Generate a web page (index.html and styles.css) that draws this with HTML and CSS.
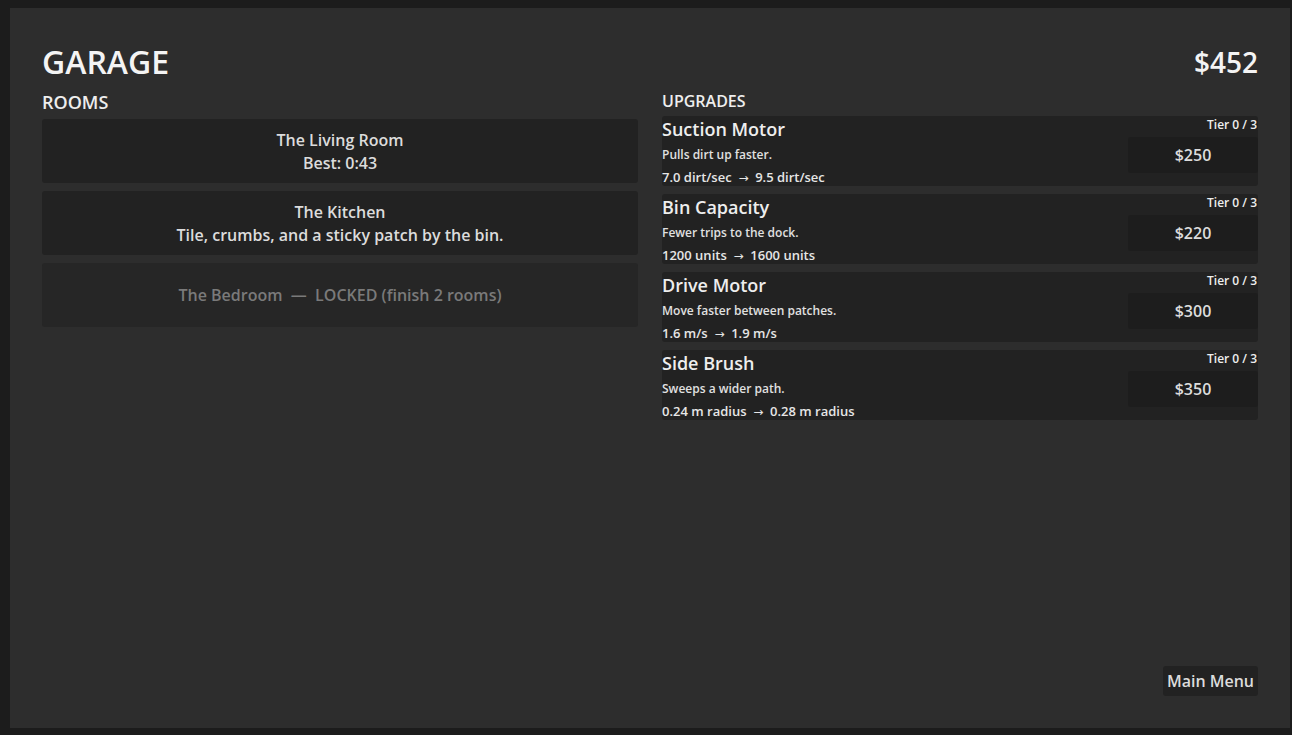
FILE: index.html
```html
<!DOCTYPE html>
<html lang="en">
<head>
    <meta charset="UTF-8">
    <meta name="viewport" content="width=device-width, initial-scale=1.0">
    <title>Garage</title>
    <link rel="stylesheet" href="styles.css">
</head>
<body>
    <div class="screen">
        <div class="header">
            <h1 class="title">GARAGE</h1>
            <div class="money">$452</div>
        </div>

        <div class="columns">
            <div class="col">
                <div class="label rooms-label">ROOMS</div>
                <button class="room">
                    <span>The Living Room</span>
                    <span>Best: 0:43</span>
                </button>
                <button class="room">
                    <span>The Kitchen</span>
                    <span>Tile, crumbs, and a sticky patch by the bin.</span>
                </button>
                <button class="room locked" disabled>
                    <span>The Bedroom &nbsp;—&nbsp; LOCKED (finish 2 rooms)</span>
                </button>
            </div>

            <div class="col">
                <div class="label upgrades-label">UPGRADES</div>

                <div class="upgrade">
                    <div class="info">
                        <div class="name">Suction Motor</div>
                        <div class="desc">Pulls dirt up faster.</div>
                        <div class="stats">7.0 dirt/sec &nbsp;<span class="arrow">→</span>&nbsp; 9.5 dirt/sec</div>
                    </div>
                    <div class="buy">
                        <div class="tier">Tier 0 / 3</div>
                        <button class="price">$250</button>
                    </div>
                </div>

                <div class="upgrade">
                    <div class="info">
                        <div class="name">Bin Capacity</div>
                        <div class="desc">Fewer trips to the dock.</div>
                        <div class="stats">1200 units &nbsp;<span class="arrow">→</span>&nbsp; 1600 units</div>
                    </div>
                    <div class="buy">
                        <div class="tier">Tier 0 / 3</div>
                        <button class="price">$220</button>
                    </div>
                </div>

                <div class="upgrade">
                    <div class="info">
                        <div class="name">Drive Motor</div>
                        <div class="desc">Move faster between patches.</div>
                        <div class="stats">1.6 m/s &nbsp;<span class="arrow">→</span>&nbsp; 1.9 m/s</div>
                    </div>
                    <div class="buy">
                        <div class="tier">Tier 0 / 3</div>
                        <button class="price">$300</button>
                    </div>
                </div>

                <div class="upgrade">
                    <div class="info">
                        <div class="name">Side Brush</div>
                        <div class="desc">Sweeps a wider path.</div>
                        <div class="stats">0.24 m radius &nbsp;<span class="arrow">→</span>&nbsp; 0.28 m radius</div>
                    </div>
                    <div class="buy">
                        <div class="tier">Tier 0 / 3</div>
                        <button class="price">$350</button>
                    </div>
                </div>
            </div>
        </div>

        <div class="footer">
            <button class="menu-btn">Main Menu</button>
        </div>
    </div>
</body>
</html>
```

FILE: styles.css
```css
body {
    margin: 0;
    background-color: #1c1c1c;
    font-family: "Open Sans", "Noto Sans", sans-serif;
    font-weight: 600;
    color: #dcdcdc;
}
button {
    font-family: inherit;
    font-weight: 600;
    border: none;
    cursor: pointer;
}
.screen {
    width: 1280px;
    height: 720px;
    margin: 8px 0 0 10px;
    padding: 32px;
    box-sizing: border-box;
    background-color: #2d2d2d;
    display: flex;
    flex-direction: column;
}
.header {
    display: flex;
    justify-content: space-between;
    align-items: center;
    height: 44px;
}
.title {
    margin: 0;
    font-size: 32px;
    font-weight: 600;
    line-height: 44px;
    color: #f4f4f4;
}
.money {
    font-size: 28px;
    line-height: 44px;
    color: #f4f4f4;
}
.columns {
    display: flex;
    gap: 24px;
    margin-top: 6px;
}
.col {
    flex: 1;
    display: flex;
    flex-direction: column;
    gap: 8px;
}
.label {
    color: #eeeeee;
    margin-bottom: -3px;
}
.rooms-label {
    font-size: 18px;
    line-height: 24px;
}
.upgrades-label {
    font-size: 16px;
    line-height: 21px;
    padding-top: 1px;
    margin-bottom: -4px;
}
.room {
    height: 64px;
    padding: 2px 0 0;
    background-color: #222222;
    border-radius: 3px;
    color: #dcdcdc;
    font-size: 16px;
    line-height: 23px;
    display: flex;
    flex-direction: column;
    align-items: center;
    justify-content: center;
}
.room.locked {
    padding-top: 0;
    background-color: #262626;
    color: #7a7a7a;
    cursor: default;
}
.upgrade {
    height: 70px;
    background-color: #222222;
    border-radius: 3px;
    display: flex;
    justify-content: space-between;
}
.info {
    display: flex;
    flex-direction: column;
}
.name {
    font-size: 18px;
    line-height: 26px;
    color: #eeeeee;
}
.desc {
    font-size: 12px;
    line-height: 25px;
    color: #e0e0e0;
}
.stats {
    font-size: 13px;
    line-height: 20px;
    color: #e6e6e6;
}
.arrow {
    font-family: "DejaVu Sans", sans-serif;
    font-weight: normal;
    font-size: 12px;
}
.buy {
    display: flex;
    flex-direction: column;
    align-items: flex-end;
    gap: 4px;
}
.tier {
    font-size: 12px;
    line-height: 17px;
    margin-right: 1px;
    color: #eeeeee;
}
.price {
    width: 130px;
    height: 36px;
    background-color: #1d1d1d;
    border-radius: 3px;
    color: #dcdcdc;
    font-size: 16px;
}
.footer {
    margin-top: auto;
    display: flex;
    justify-content: flex-end;
}
.menu-btn {
    height: 30px;
    padding: 0 4px;
    background-color: #222222;
    border-radius: 3px;
    color: #dcdcdc;
    font-size: 16px;
}
```
